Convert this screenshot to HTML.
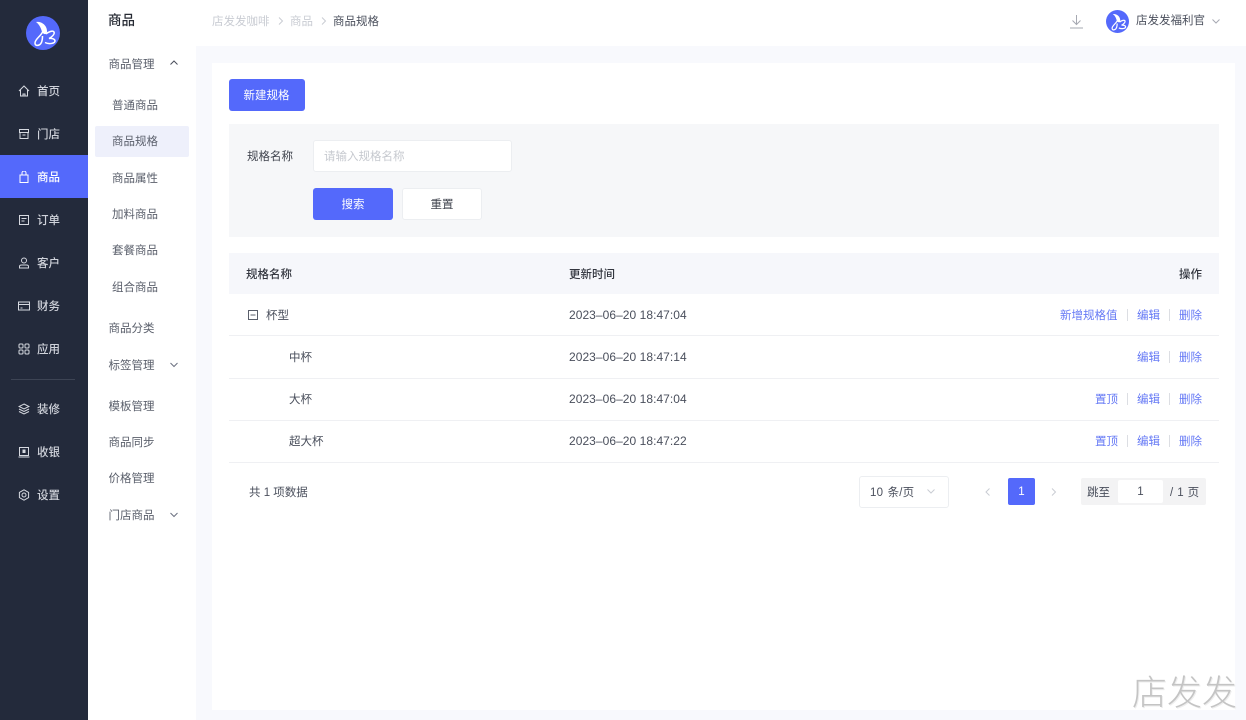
<!DOCTYPE html>
<html lang="zh-CN"><head><meta charset="utf-8"><title>商品规格</title>
<style>
*{box-sizing:border-box}
html,body{margin:0;padding:0}
body{width:1246px;height:720px;overflow:hidden;position:relative;background:#fff;font-family:"Liberation Sans","Noto Sans CJK SC",sans-serif;font-size:11.5px;color:#4a4f5c}
.a{position:absolute;white-space:nowrap}
.t{position:absolute;white-space:nowrap;line-height:16px;height:16px;margin-top:1px}
.nav{color:#cfd2da;left:37px;font-size:11.5px;font-weight:500}
.sub{left:108.500px;color:#5a5f6b}
.sub2{left:112px;color:#5a5f6b}
.ic{position:absolute;fill:none;stroke:#d6d9e0;stroke-width:1}
.link{color:#6478f5}
.sep{position:absolute;width:1px;height:12px;background:#dcdee3}
.date{left:569px;color:#4a4f5c;font-size:12px;letter-spacing:.05px;margin-top:0}
.hr{position:absolute;left:229px;width:990px;height:1px;background:#eff0f3}
</style></head><body>
<div class="a" style="left:0;top:0;width:88px;height:720px;background:#232a3b"></div>
<div class="a" style="left:0;top:155px;width:88px;height:43px;background:#5469fb"></div>
<div class="a" style="left:11px;top:379px;width:64px;height:1px;background:#3d4454"></div>
<svg class="a" style="left:26px;top:16px" width="34" height="34" viewBox="0 0 34 34"><circle cx="17" cy="17" r="17" fill="#5469fb"/><path d="M10 6C15 5 21 9 21 15 21 19 18 19 16 16 15 12 13 8 10 6Z" fill="#fff"/><path d="M16.500 16C15 20 9 23 9 27c0 2.500 2 2.800 4 2 2.500-1 3.500-4 3.500-9M20 18c2-2 7-4 8-2 1 2-2 5-5 6.500 3-.5 6 .5 6 2.500 0 2.500-6 3.500-10 1.500" fill="none" stroke="#fff" stroke-width="1.500"/></svg>

<svg class="ic" style="left:18px;top:85px" width="12" height="12" viewBox="0 0 12 12"><path d="M1 6 6 1l5 5M2.500 5v6h7V5M5 11V9h2v2"/></svg>
<svg class="ic" style="left:18px;top:128px" width="12" height="12" viewBox="0 0 12 12"><path d="M1.500 1.500h9v3h-9zM2 4.500v6h8v-6M4.500 7h3"/></svg>
<svg class="ic" style="left:18px;top:171px;stroke:#fff" width="12" height="12" viewBox="0 0 12 12"><path d="M2 4h8v7.500H2zM4 4V2a2 2 0 0 1 4 0v2"/></svg>
<svg class="ic" style="left:18px;top:214px" width="12" height="12" viewBox="0 0 12 12"><path d="M1.500 1.500h9v9h-9zM3.500 4.500h5M3.500 7h3"/></svg>
<svg class="ic" style="left:18px;top:257px" width="12" height="12" viewBox="0 0 12 12"><circle cx="6" cy="3.500" r="2.500"/><path d="M1.500 11V9.500c0-1 1-1.500 2-1.500h5c1 0 2 .5 2 1.500V11z"/></svg>
<svg class="ic" style="left:18px;top:300px" width="12" height="12" viewBox="0 0 12 12"><path d="M.5 2h11v8H.5zM.5 4.500h11M2.500 8h2"/></svg>
<svg class="ic" style="left:18px;top:343px" width="12" height="12" viewBox="0 0 12 12"><rect x="1" y="1" width="4" height="4" rx="1"/><rect x="7" y="1" width="4" height="4" rx="1"/><rect x="1" y="7" width="4" height="4" rx="1"/><rect x="7" y="7" width="4" height="4" rx="1"/></svg>
<svg class="ic" style="left:18px;top:403px" width="12" height="12" viewBox="0 0 12 12"><path d="M6 1 11 3.500 6 6 1 3.500zM1 6l5 2.500L11 6M1 8.500 6 11l5-2.500"/></svg>
<svg class="ic" style="left:18px;top:446px" width="12" height="12" viewBox="0 0 12 12"><path d="M1.500 1.500h9v8h-9zM.5 11h11"/><path d="M5 4h2v2.500H5z" fill="#d6d9e0"/></svg>
<svg class="ic" style="left:18px;top:489px" width="12" height="12" viewBox="0 0 12 12"><path d="M6 .8 10.600 3.400v5.200L6 11.200 1.400 8.600V3.400z"/><circle cx="6" cy="6" r="2"/></svg>

<div class="t nav" style="top:83px">首页</div>
<div class="t nav" style="top:126px">门店</div>
<div class="t nav" style="top:169px;color:#fff">商品</div>
<div class="t nav" style="top:212px">订单</div>
<div class="t nav" style="top:255px">客户</div>
<div class="t nav" style="top:298px">财务</div>
<div class="t nav" style="top:341px">应用</div>
<div class="t nav" style="top:401px">装修</div>
<div class="t nav" style="top:444px">收银</div>
<div class="t nav" style="top:487px">设置</div>

<div class="t" style="left:108px;top:12px;font-size:13.500px;color:#262a33;font-weight:500">商品</div>
<div class="t sub" style="top:56px">商品管理</div>
<svg class="a" style="left:169px;top:59px" width="10" height="8" viewBox="0 0 10 8"><path d="M1.500 5.500 5 2l3.500 3.500" fill="none" stroke="#4a4f5c"/></svg>
<div class="a" style="left:95px;top:126px;width:94px;height:31px;background:#eef0fb;border-radius:2px"></div>
<div class="t sub2" style="top:97px">普通商品</div>
<div class="t sub2" style="top:133px">商品规格</div>
<div class="t sub2" style="top:170px">商品属性</div>
<div class="t sub2" style="top:206px">加料商品</div>
<div class="t sub2" style="top:242px">套餐商品</div>
<div class="t sub2" style="top:279px">组合商品</div>
<div class="t sub" style="top:320px">商品分类</div>
<div class="t sub" style="top:357px">标签管理</div>
<svg class="a" style="left:169px;top:361px" width="10" height="8" viewBox="0 0 10 8"><path d="M1.500 2 5 5.500 8.500 2" fill="none" stroke="#6b7080"/></svg>
<div class="t sub" style="top:398px">模板管理</div>
<div class="t sub" style="top:434px">商品同步</div>
<div class="t sub" style="top:470px">价格管理</div>
<div class="t sub" style="top:507px">门店商品</div>
<svg class="a" style="left:169px;top:511px" width="10" height="8" viewBox="0 0 10 8"><path d="M1.500 2 5 5.500 8.500 2" fill="none" stroke="#6b7080"/></svg>

<div class="a" style="left:196px;top:46px;width:1050px;height:674px;background:#f8f9fd"></div>
<div class="a" style="left:212px;top:63px;width:1023px;height:647px;background:#fff"></div>

<div class="t" style="left:212px;top:13px;color:#c9ccd3">店发发咖啡</div>
<svg class="a" style="left:277px;top:16px" width="8" height="10" viewBox="0 0 8 10"><path d="M2 1.500 5.500 5 2 8.500" fill="none" stroke="#c9ccd3"/></svg>
<div class="t" style="left:290px;top:13px;color:#c9ccd3">商品</div>
<svg class="a" style="left:320px;top:16px" width="8" height="10" viewBox="0 0 8 10"><path d="M2 1.500 5.500 5 2 8.500" fill="none" stroke="#c9ccd3"/></svg>
<div class="t" style="left:333px;top:13px;color:#4a4f5c">商品规格</div>

<svg class="a" style="left:1069px;top:14px" width="15" height="15" viewBox="0 0 15 15"><path d="M7.500 1v9M3.500 6.500l4 4 4-4M1 14h13" fill="none" stroke="#a6a9b2"/></svg>
<svg class="a" style="left:1106px;top:10px" width="23" height="23" viewBox="0 0 34 34"><circle cx="17" cy="17" r="17" fill="#5469fb"/><path d="M10 6C15 5 21 9 21 15 21 19 18 19 16 16 15 12 13 8 10 6Z" fill="#fff"/><path d="M16.500 16C15 20 9 23 9 27c0 2.500 2 2.800 4 2 2.500-1 3.500-4 3.500-9M20 18c2-2 7-4 8-2 1 2-2 5-5 6.500 3-.5 6 .5 6 2.500 0 2.500-6 3.500-10 1.500" fill="none" stroke="#fff" stroke-width="1.800"/></svg>
<div class="t" style="left:1136px;top:12px;color:#4a4f5c">店发发福利官</div>
<svg class="a" style="left:1211px;top:18px" width="10" height="7" viewBox="0 0 10 7"><path d="M1.500 1.500 5 5l3.500-3.500" fill="none" stroke="#a6a9b2"/></svg>

<div class="a" style="left:229px;top:79px;width:76px;height:32px;background:#5469fb;border-radius:3px;color:#fff;text-align:center;line-height:34px;padding-right:1px">新建规格</div>
<div class="a" style="left:229px;top:124px;width:990px;height:113px;background:#f6f7f9"></div>
<div class="t" style="left:247px;top:148px;color:#3f434d">规格名称</div>
<div class="a" style="left:313px;top:140px;width:199px;height:32px;background:#fff;border:1px solid #eceef1;border-radius:3px;color:#c6c9cf;line-height:32px;padding-left:10px">请输入规格名称</div>
<div class="a" style="left:313px;top:188px;width:80px;height:32px;background:#5469fb;border-radius:3px;color:#fff;text-align:center;line-height:34px">搜索</div>
<div class="a" style="left:402px;top:188px;width:80px;height:32px;background:#fff;border:1px solid #eceef1;border-radius:3px;color:#3f434d;text-align:center;line-height:32px">重置</div>

<div class="a" style="left:229px;top:253px;width:990px;height:41px;background:#f6f7fb"></div>
<div class="t" style="left:246px;top:266px;color:#33363f;font-weight:500">规格名称</div>
<div class="t" style="left:569px;top:266px;color:#33363f;font-weight:500">更新时间</div>
<div class="t" style="left:1179px;top:266px;color:#33363f;font-weight:500">操作</div>

<svg class="a" style="left:248px;top:310px" width="10" height="10" viewBox="0 0 10 10"><path d="M.5.500h9v9h-9zM2.500 5h5" fill="none" stroke="#5a5f6b"/></svg>
<div class="t" style="left:266px;top:307px">杯型</div>
<div class="t" style="left:289px;top:349px">中杯</div>
<div class="t" style="left:289px;top:391px">大杯</div>
<div class="t" style="left:289px;top:433px">超大杯</div>
<div class="t date" style="top:307px">2023–06–20 18:47:04</div>
<div class="t date" style="top:349px">2023–06–20 18:47:14</div>
<div class="t date" style="top:391px">2023–06–20 18:47:04</div>
<div class="t date" style="top:433px">2023–06–20 18:47:22</div>

<div class="t link" style="left:1060px;top:307px">新增规格值</div><div class="sep" style="left:1127px;top:309px"></div>
<div class="t link" style="left:1137px;top:307px">编辑</div><div class="sep" style="left:1169px;top:309px"></div>
<div class="t link" style="left:1179px;top:307px">删除</div>
<div class="t link" style="left:1137px;top:349px">编辑</div><div class="sep" style="left:1169px;top:351px"></div>
<div class="t link" style="left:1179px;top:349px">删除</div>
<div class="t link" style="left:1095px;top:391px">置顶</div><div class="sep" style="left:1127px;top:393px"></div>
<div class="t link" style="left:1137px;top:391px">编辑</div><div class="sep" style="left:1169px;top:393px"></div>
<div class="t link" style="left:1179px;top:391px">删除</div>
<div class="t link" style="left:1095px;top:433px">置顶</div><div class="sep" style="left:1127px;top:435px"></div>
<div class="t link" style="left:1137px;top:433px">编辑</div><div class="sep" style="left:1169px;top:435px"></div>
<div class="t link" style="left:1179px;top:433px">删除</div>
<div class="hr" style="top:335px"></div>
<div class="hr" style="top:378px"></div>
<div class="hr" style="top:420px"></div>
<div class="hr" style="top:462px"></div>

<div class="t" style="left:249px;top:484px">共 1 项数据</div>
<div class="a" style="left:859px;top:476px;width:90px;height:32px;border:1px solid #eceef1;border-radius:3px"></div>
<div class="t" style="left:870px;top:484px;word-spacing:1px;letter-spacing:.2px">10 条/页</div>
<svg class="a" style="left:926px;top:488px" width="10" height="7" viewBox="0 0 10 7"><path d="M1.500 1.500 5 5l3.500-3.500" fill="none" stroke="#c9ccd3"/></svg>
<svg class="a" style="left:984px;top:487px" width="8" height="10" viewBox="0 0 8 10"><path d="M5.500 1.500 2 5l3.500 3.500" fill="none" stroke="#c9ccd3"/></svg>
<div class="a" style="left:1008px;top:478px;width:27px;height:27px;background:#5469fb;border-radius:2px;color:#fff;text-align:center;line-height:29px">1</div>
<svg class="a" style="left:1050px;top:487px" width="8" height="10" viewBox="0 0 8 10"><path d="M2 1.500 5.500 5 2 8.500" fill="none" stroke="#c9ccd3"/></svg>
<div class="a" style="left:1081px;top:478px;width:125px;height:27px;background:#f3f3f4;border-radius:2px"></div>
<div class="t" style="left:1087px;top:484px">跳至</div>
<div class="a" style="left:1118px;top:480px;width:45px;height:23px;background:#fff;border-radius:2px;text-align:center;line-height:25px">1</div>
<div class="t" style="left:1170px;top:484px;word-spacing:.8px">/ 1 页</div>

<div class="a" style="left:1132px;top:674px;font-size:35px;line-height:40px;font-weight:300;color:#c4c4c4;text-shadow:1px 1px 0 #eee">店发发</div>
</body></html>
